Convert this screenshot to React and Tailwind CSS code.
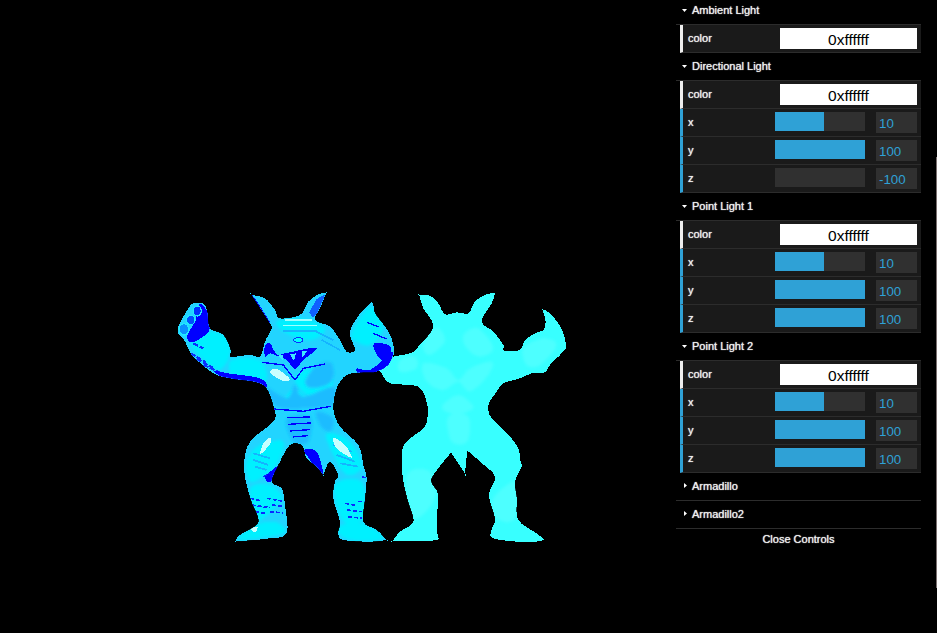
import React from 'react';

const Arrow = ({ open, first }) => (
  <svg
    width="5"
    height="5"
    viewBox="0 0 5 5"
    className={`absolute ${open ? 'left-[6px]' : 'left-[7px]'} ${first ? 'top-[8px]' : open ? 'top-[11px]' : 'top-[10px]'}`}
  >
    <polygon points={open ? '0,1 5,1 2.5,4' : '1,0 4,2.5 1,5'} fill="#fff" />
  </svg>
);

const Title = ({ label, open, first }) => (
  <li className={`relative border-b border-[#2c2c2c] pl-4 text-[#eee] [text-shadow:0_0_1px_#fff] ${first ? 'h-[25px] leading-[21px]' : 'h-[28px] leading-[27px]'}`}>
    <Arrow open={open} first={first} />
    {label}
  </li>
);

const ColorRow = () => (
  <li className="ml-1 h-[28px] flex items-center bg-[#1a1a1a] border-b border-[#2c2c2c] border-l-[3px] border-l-[#eee] pl-[5px] pr-1">
    <span className="w-[92px] text-[#eee] [text-shadow:0_0_1px_#fff]">color</span>
    <input
      readOnly
      value="0xffffff"
      className="w-[137px] h-[21px] pt-[2px] bg-white text-black text-center text-[15.5px] outline-none"
    />
  </li>
);

const NumberRow = ({ label, value, pct }) => (
  <li className="ml-1 h-[28px] flex items-center bg-[#1a1a1a] border-b border-[#2c2c2c] border-l-[3px] border-l-[#2fa1d6] pl-[5px] pr-1">
    <span className="w-[87px] text-[#eee] [text-shadow:0_0_1px_#fff]">{label}</span>
    <div className="w-[90px] h-[19px] mb-[2px] bg-[#303030]">
      <div className="h-full bg-[#2fa1d6]" style={{ width: `${pct}%` }} />
    </div>
    <input
      readOnly
      value={value}
      className="ml-[11px] w-[41px] h-[21px] pt-[2px] bg-[#303030] text-[#2fa1d6] pl-[3px] text-[13.33px] outline-none"
    />
  </li>
);

const lights = [{ name: 'Point Light 1' }, { name: 'Point Light 2' }];

const Controls = () => (
  <ul className="absolute top-0 right-[16px] w-[245px] text-[11px] font-['Liberation_Sans',sans-serif]">
    <Title label="Ambient Light" open first />
    <ColorRow />
    <Title label="Directional Light" open />
    <ColorRow />
    <NumberRow label="x" value="10" pct={54.5} />
    <NumberRow label="y" value="100" pct={100} />
    <NumberRow label="z" value="-100" pct={0} />
    {lights.map((l) => (
      <React.Fragment key={l.name}>
        <Title label={l.name} open />
        <ColorRow />
        <NumberRow label="x" value="10" pct={54.5} />
        <NumberRow label="y" value="100" pct={100} />
        <NumberRow label="z" value="100" pct={100} />
      </React.Fragment>
    ))}
    <Title label="Armadillo" />
    <Title label="Armadillo2" />
    <li className="h-[20px] leading-[20px] text-center text-[#eee] [text-shadow:0_0_1px_#fff]">Close Controls</li>
  </ul>
);

// closed catmull-rom path through "x,y x,y ..." - repeat a point for a sharp tip
const smooth = (str) => {
  const p = str.trim().split(/\s+/).map((s) => s.split(',').map(Number));
  const n = p.length;
  let d = `M${p[0][0]} ${p[0][1]}`;
  for (let i = 0; i < n; i++) {
    const a = p[(i - 1 + n) % n];
    const b = p[i];
    const c = p[(i + 1) % n];
    const e = p[(i + 2) % n];
    d += `C${b[0] + (c[0] - a[0]) / 6} ${b[1] + (c[1] - a[1]) / 6} ${c[0] - (e[0] - b[0]) / 6} ${c[1] - (e[1] - b[1]) / 6} ${c[0]} ${c[1]}`;
  }
  return d + 'Z';
};

const Blob = ({ pts, fill }) => <path d={smooth(pts)} fill={fill} />;

const flatOutline =
  '118,30 118,30 150,32 175,55 195,88 230,82 265,85 285,50 320,28 345,25 345,25 335,55 305,110 340,140 370,180 372,197 420,195 435,165 470,143 490,135 497,110 487,72 487,72 510,85 535,115 550,145 558,185 545,205 510,240 495,262 455,265 420,280 370,295 350,320 327,355 327,385 345,410 390,455 415,490 422,530 425,545 405,590 410,640 415,705 470,745 495,765 495,765 440,772 340,760 335,735 345,700 327,630 345,575 300,530 262,497 262,497 255,565 255,565 215,505 215,500 215,500 160,570 155,595 175,630 170,700 172,745 170,765 100,768 38,768 38,768 60,740 100,710 85,650 70,590 65,520 75,475 130,430 142,400 142,360 115,305 30,295 0,260 -30,250 -10,235 40,215 90,205 115,185 160,125 130,70';

const flatPatches = [
  '140,150 175,130 195,170 150,210 130,190',
  '250,150 295,130 340,190 300,215 260,190',
  '130,235 200,250 235,285 270,250 335,230 325,270 270,320 235,290 190,315 140,290',
  '185,365 235,330 280,365 250,385 210,385',
  '205,395 265,395 262,470 215,470',
  '60,225 105,215 110,250 60,260',
  '430,190 490,160 530,180 480,240 440,240',
  '80,570 150,560 165,640 100,700',
  '340,640 410,590 405,700 350,700',
];

// flat lit copy on the right, traced in 3x zoom coords
const FlatArmadillo = () => (
  <g transform="translate(380 285) scale(0.3333)">
    <path d={smooth(flatOutline)} fill="#38ffff" />
    <g filter="url(#soft)" clipPath="url(#flat-clip)">
      {flatPatches.map((pts) => (
        <Blob key={pts} pts={pts} fill="#4dffff" />
      ))}
    </g>
  </g>
);

const shadedOutline =
  '25,125 40,95 62,60 75,55 100,55 112,80 120,130 160,150 182,195 182,215 240,210 270,215 285,170 305,130 300,115 245,30 245,30 285,40 315,75 330,100 390,90 415,50 445,28 468,25 468,25 450,70 435,105 480,125 510,165 530,200 555,195 540,145 560,100 600,55 610,60 615,85 645,125 665,160 672,205 655,240 620,260 580,262 530,270 500,310 490,370 510,425 565,480 580,540 590,580 585,640 580,710 620,735 650,765 650,765 600,770 520,765 505,745 510,710 490,640 495,590 505,570 480,530 460,570 460,570 440,545 410,520 395,480 360,480 330,530 305,590 335,610 345,660 350,745 300,760 250,765 195,770 195,770 210,750 265,712 245,650 230,600 222,540 240,470 310,410 312,370 280,300 180,280 130,265 70,215 55,190 40,160 25,145';

const brights = [
  '62,175 110,140 160,150 182,200 150,255 100,225',
  '185,225 270,225 290,285 240,285 185,270',
  '380,270 450,245 490,295 430,335 385,305',
  '545,145 600,65 640,130 600,180 560,170',
  '320,110 400,100 465,130 425,165 350,145',
  '345,340 375,312 420,350 410,368 330,368',
  '230,530 270,480 340,470 320,540 280,575 240,590',
  '470,445 540,470 575,545 530,570 490,510',
  '205,762 262,718 320,712 345,742 280,758',
  '510,722 580,715 640,760 560,768 510,750',
  '240,610 300,600 335,640 280,700 260,700',
  '495,600 575,590 580,700 520,710',
];

// soft mid blue under the chest and on the flanks
const mids = [
  '285,305 350,340 375,300 400,335 490,305 490,360 400,370 320,365',
  '440,240 485,235 485,290 430,310 405,290',
  '350,400 420,395 415,470 370,470',
  '440,380 490,400 480,440 450,420',
];

const highlights = [
  '300,262 322,252 360,283 335,286',
  '282,472 303,458 298,480 270,508',
  '490,458 525,480 545,518 500,490',
  '240,730 262,726 255,742',
];

const blues = [
  '130,258 180,266 270,280 285,308 180,286',
  '560,250 600,255 650,215 670,200 655,240 620,260 570,268',
  '285,182 300,175 320,208 345,205 418,190 440,192 400,225 375,252 350,225 320,212 300,205 285,215',
  '402,495 440,500 460,566 445,566 420,525',
  '286,575 330,540 302,590',
  '612,175 662,185 650,232 622,212',
];

// mouth teeth over the blue
const teeth = [
  '325,212 340,208 338,225', '360,208 378,205 372,228', '395,200 412,196 398,218',
];

// line work: pec creases, belt, ribs, shell bands
const bandLines = [
  'M275 232L340 240L375 285L400 250L465 237',
  'M310 372L400 379L482 364',
  'M350 398L420 396',
  'M355 418L422 414',
  'M360 438L420 434',
  'M368 456L415 452',
  'M590 112L628 126',
  'M610 145L650 162',
  'M245 30L272 70L300 115',
];

const dashes = [
  'M240 640L275 648', 'M290 640L335 648', 'M245 660L300 668', 'M305 660L342 664',
  'M255 680L290 686', 'M300 680L340 684', 'M525 655L560 662', 'M565 650L585 650',
  'M530 675L575 680', 'M535 695L575 700', 'M280 575L300 565', 'M575 575L590 580',
];

const ridges = [
  'M250 505L300 520', 'M250 525L295 540', 'M255 545L290 555',
  'M490 480L545 500', 'M500 510L555 530', 'M510 535L565 545',
  'M340 138L440 138', 'M440 140L490 165', 'M455 165L510 195',
];

const shellLights = ['M345 105L425 105', 'M338 122L440 122'];

// dark bands on the underside of the forearm
const forearmBands = ['M62 205L108 232', 'M80 222L128 248', 'M100 240L150 262', 'M70 175L100 190'];

// shaded copy on the left, same trace method
const ShadedArmadillo = () => (
  <g transform="translate(170 285) scale(0.3333)">
    <path d={smooth(shadedOutline)} fill="#22d4ff" />
    <g filter="url(#soft)" clipPath="url(#shaded-clip)">
      {brights.map((pts) => (
        <Blob key={pts} pts={pts} fill="#00f0ff" />
      ))}
      {mids.map((pts) => (
        <Blob key={pts} pts={pts} fill="#1cbcff" />
      ))}
    </g>
    <g clipPath="url(#shaded-clip)">
      {/* fist: blue back of the hand with ringed fingers */}
      <Blob pts="88,58 112,80 120,130 95,158 62,172 52,150 75,110" fill="#0000ff" />
      <ellipse cx="42" cy="133" rx="15" ry="17" fill="#0a90ff" stroke="#20e8ff" strokeWidth="4" />
      <ellipse cx="62" cy="105" rx="13" ry="14" fill="#0050ff" stroke="#20e8ff" strokeWidth="4" />
      <ellipse cx="82" cy="78" rx="12" ry="15" fill="#0030ff" stroke="#20e8ff" strokeWidth="4" />
      {forearmBands.map((d) => (
        <path key={d} d={d} fill="none" stroke="#0a30ff" strokeWidth="6" strokeDasharray="16 5" />
      ))}
      {ridges.map((d) => (
        <path key={d} d={d} fill="none" stroke="#14b4ff" strokeWidth="5" />
      ))}
      {shellLights.map((d) => (
        <path key={d} d={d} fill="none" stroke="#a0ffff" strokeWidth="4" />
      ))}
      {highlights.map((pts) => (
        <Blob key={pts} pts={pts} fill="#c8ffff" />
      ))}
      {blues.map((pts) => (
        <Blob key={pts} pts={pts} fill="#0000ff" />
      ))}
      {teeth.map((pts) => (
        <polygon key={pts} points={pts} fill="#40e8ff" />
      ))}
      {bandLines.map((d) => (
        <path key={d} d={d} fill="none" stroke="#0000ff" strokeWidth="4" />
      ))}
      {dashes.map((d) => (
        <path key={d} d={d} fill="none" stroke="#0a28ff" strokeWidth="5" strokeDasharray="12 6" />
      ))}
      {/* right ear hollow */}
      <polygon points="466,28 440,42 418,82 428,98 442,85" fill="#1060ff" />
      {/* eye */}
      <ellipse cx="385" cy="165" rx="14" ry="7" fill="#00ffff" stroke="#0a30ff" strokeWidth="3" />
    </g>
  </g>
);

export default function App() {
  return (
    <div className="relative h-screen overflow-hidden bg-black">
      <svg width="937" height="633" viewBox="0 0 937 633" shapeRendering="crispEdges" className="block">
        <defs>
          <filter id="soft">
            <feGaussianBlur stdDeviation="5" />
          </filter>
          <clipPath id="flat-clip">
            <path d={smooth(flatOutline)} />
          </clipPath>
          <clipPath id="shaded-clip">
            <path d={smooth(shadedOutline)} />
          </clipPath>
        </defs>
        <FlatArmadillo />
        <ShadedArmadillo />
      </svg>
      <Controls />
      <div className="absolute top-[157px] right-0 w-px h-[431px] bg-[#7a7070]" />
    </div>
  );
}
